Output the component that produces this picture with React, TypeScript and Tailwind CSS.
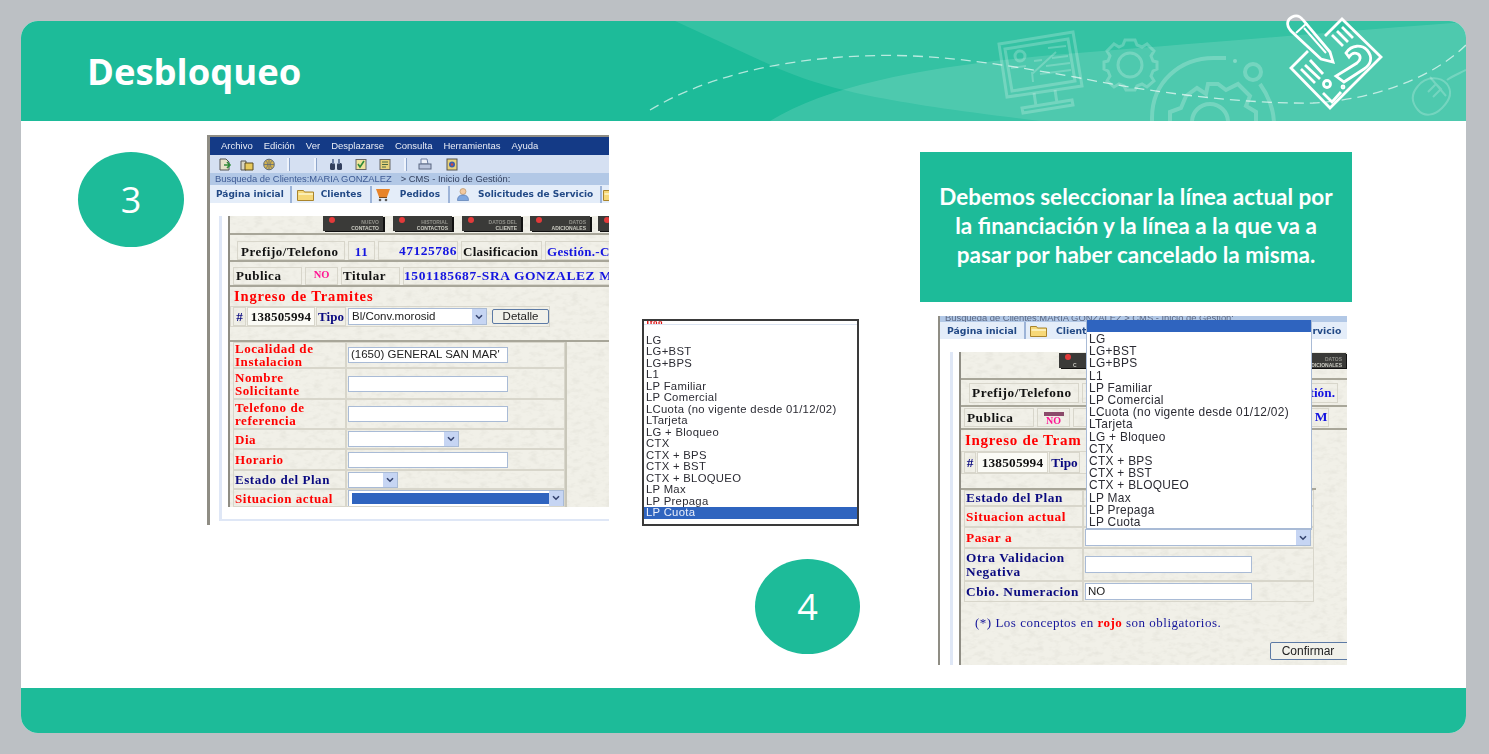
import type { ReactNode } from "react";

const listItems = [
  "LG",
  "LG+BST",
  "LG+BPS",
  "L1",
  "LP Familiar",
  "LP Comercial",
  "LCuota (no vigente desde 01/12/02)",
  "LTarjeta",
  "LG + Bloqueo",
  "CTX",
  "CTX + BPS",
  "CTX + BST",
  "CTX + BLOQUEO",
  "LP Max",
  "LP Prepaga",
  "LP Cuota",
];

function Paper() {
  return (
    <svg className="absolute inset-0 h-full w-full" aria-hidden="true">
      <filter id="paper-grain">
        <feTurbulence type="fractalNoise" baseFrequency="0.12 0.22" numOctaves="3" seed="4" />
        <feColorMatrix values="0 0 0 0 0.6  0 0 0 0 0.59  0 0 0 0 0.52  0.6 0 0 0 -0.27" />
      </filter>
      <rect width="100%" height="100%" filter="url(#paper-grain)" />
    </svg>
  );
}

function Cell({ className, children }: { className: string; children?: ReactNode }) {
  return (
    <div className={`flex shrink-0 items-center overflow-hidden whitespace-nowrap border border-[#d8d6cb] ${className}`}>
      {children}
    </div>
  );
}

function Chevron() {
  return (
    <div className="flex h-full w-[14px] shrink-0 items-center justify-center bg-[#c6d5f3]">
      <svg width="8" height="6" viewBox="0 0 8 6" fill="none" stroke="#34436e" strokeWidth="1.6">
        <path d="M1 1.2 4 4.2 7 1.2" />
      </svg>
    </div>
  );
}

function Field({ className, value }: { className: string; value?: string }) {
  return (
    <div className={`flex shrink-0 items-center overflow-hidden whitespace-nowrap border border-[#a9bbd6] bg-white pl-[2px] font-['Liberation_Sans',sans-serif] text-[11.500px] text-[#222] ${className}`}>
      {value}
    </div>
  );
}

function SelectBox({ className, value, fill }: { className: string; value?: string; fill?: boolean }) {
  return (
    <div className={`flex shrink-0 items-center justify-between border border-[#a9bbd6] bg-white pl-[3px] font-['Liberation_Sans',sans-serif] text-[11.500px] text-[#222] ${className}`}>
      {fill ? <div className="h-[11px] flex-1 bg-[#2f64bf]" /> : <span>{value}</span>}
      <Chevron />
    </div>
  );
}

function ActionButton({ top, bottom, className }: { top: string; bottom: string; className: string }) {
  return (
    <div className={`relative flex h-[15px] shrink-0 flex-col items-end justify-end overflow-hidden bg-[#3a3a38] pr-[4px] font-['Liberation_Sans',sans-serif] text-[5px] font-bold leading-[6px] text-[#c9c9c0] shadow-[2px_1px_0_#111] ${className}`}>
      <span className="absolute left-[6px] top-[1px] h-[6px] w-[6px] rounded-full bg-[#e33a3a]" />
      <span className="opacity-60">{top}</span>
      <span>{bottom}</span>
    </div>
  );
}

function MenuBar() {
  return (
    <div className="flex h-[18px] items-center gap-[11px] bg-[#143a86] pl-[11px] font-['Liberation_Sans',sans-serif] text-[9.500px] text-[#e8ecf5]">
      <span>Archivo</span>
      <span>Edición</span>
      <span>Ver</span>
      <span>Desplazarse</span>
      <span>Consulta</span>
      <span>Herramientas</span>
      <span>Ayuda</span>
    </div>
  );
}

function ToolIcon({ kind, className }: { kind: "page" | "folder" | "globe" | "find" | "check" | "note" | "print" | "photo"; className: string }) {
  return (
    <svg width="14" height="13" viewBox="0 0 14 13" className={`shrink-0 ${className}`}>
      {kind === "page" && (
        <>
          <path d="M2 1h6l3 3v8H2z" fill="#e6e3c8" stroke="#555" />
          <path d="M6 7h6M9 4l3 3-3 3" fill="none" stroke="#2f8a3a" strokeWidth="1.6" />
        </>
      )}
      {kind === "folder" && (
        <>
          <path d="M1 3h5v9H1z" fill="#d8d5c2" stroke="#555" />
          <path d="M5 5h8v7H5z" fill="#e7c95c" stroke="#5b4a1e" />
        </>
      )}
      {kind === "globe" && (
        <>
          <circle cx="7" cy="6.500" r="5.300" fill="#d7b54e" stroke="#5d6a7a" />
          <path d="M2 6.500h10M7 1.500v10M4 2.500c2 2 2 6 0 8M10 2.500c-2 2-2 6 0 8" fill="none" stroke="#5d6a7a" strokeWidth=".8" />
        </>
      )}
      {kind === "find" && (
        <>
          <rect x="1" y="5" width="5" height="7" rx="1.500" fill="#33405e" />
          <rect x="8" y="5" width="5" height="7" rx="1.500" fill="#33405e" />
          <path d="M3 1h2v5H3zM9 1h2v5H9z" fill="#6d7fa3" />
        </>
      )}
      {kind === "check" && (
        <>
          <rect x="2" y="1.500" width="10" height="10" fill="#efe39c" stroke="#666" />
          <path d="M4 6l2 3 4-6" fill="none" stroke="#2f8a3a" strokeWidth="1.6" />
        </>
      )}
      {kind === "note" && (
        <>
          <rect x="2" y="1.500" width="10" height="10" fill="#e7d27a" stroke="#666" />
          <path d="M4 4h6M4 6.500h6M4 9h4" stroke="#4d6a45" />
        </>
      )}
      {kind === "print" && (
        <>
          <path d="M3 1h6l1 5H3z" fill="#eef1f8" stroke="#6d7fa3" />
          <rect x="1" y="6" width="12" height="5" fill="#b9c4dc" stroke="#5a6680" />
        </>
      )}
      {kind === "photo" && (
        <>
          <rect x="2" y="1" width="10" height="11" fill="#e7d27a" stroke="#555" />
          <circle cx="7" cy="6.500" r="3" fill="#3d5fb0" />
          <circle cx="7" cy="6.500" r="1.200" fill="#d9483b" />
        </>
      )}
    </svg>
  );
}

function ToolSep({ className }: { className: string }) {
  return <div className={`h-[13px] w-[2px] shrink-0 bg-[#eef3fb] shadow-[1px_0_0_#8fa6cb] ${className}`} />;
}

function Toolbar() {
  return (
    <div className="flex h-[18px] items-center bg-[#d5e0f2] pl-[8px]">
      <ToolIcon kind="page" className="" />
      <ToolIcon kind="folder" className="ml-[8px]" />
      <ToolIcon kind="globe" className="ml-[8px]" />
      <ToolSep className="ml-[11px]" />
      <ToolSep className="ml-[25px]" />
      <ToolIcon kind="find" className="ml-[13px]" />
      <ToolIcon kind="check" className="ml-[11px]" />
      <ToolIcon kind="note" className="ml-[10px]" />
      <ToolSep className="ml-[12px]" />
      <ToolIcon kind="print" className="ml-[12px]" />
      <ToolIcon kind="photo" className="ml-[13px]" />
    </div>
  );
}

function FolderIcon() {
  return (
    <svg width="17" height="13" viewBox="0 0 17 13" className="shrink-0">
      <path d="M.5 2.500h6l1 1.500h9v8.500H.5z" fill="#f6d878" stroke="#a9842c" />
      <path d="M1.500 5h14.500v2H1.500z" fill="#fbeeb5" />
    </svg>
  );
}

function CartIcon() {
  return (
    <svg width="16" height="14" viewBox="0 0 16 14" className="shrink-0">
      <path d="M1 1h14l-3 8H4z" fill="#e8842a" />
      <path d="M4 9.500h8" stroke="#7a4a1e" />
      <circle cx="5" cy="12" r="1.300" fill="#5b5b5b" />
      <circle cx="11" cy="12" r="1.300" fill="#5b5b5b" />
    </svg>
  );
}

function PersonIcon() {
  return (
    <svg width="12" height="13" viewBox="0 0 12 13" className="shrink-0">
      <circle cx="6" cy="3.500" r="3" fill="#f2c9a0" stroke="#b08a5a" strokeWidth=".6" />
      <path d="M.5 12.500c0-4 2-5.500 5.500-5.500s5.500 1.500 5.500 5.500z" fill="#7ea7e0" stroke="#4c6fa8" strokeWidth=".6" />
    </svg>
  );
}

function TabSep({ className }: { className: string }) {
  return <div className={`h-[17px] w-[2px] shrink-0 bg-[#9db4d8] ${className}`} />;
}

function RedLabel({ children, className = "" }: { children: ReactNode; className?: string }) {
  return <span className={`font-bold leading-[13px] tracking-[0.55px] text-[#ff0000] ${className}`}>{children}</span>;
}

function NavyLabel({ children, className = "" }: { children: ReactNode; className?: string }) {
  return <span className={`font-bold leading-[14px] tracking-[0.55px] text-[#0a0a80] ${className}`}>{children}</span>;
}

function FirstShot() {
  return (
    <div className="mt-[14px] h-[390px] w-[402px] shrink-0 overflow-hidden border-l-[3px] border-t-2 border-[#8f8d84] bg-white blur-[0.35px]">
      <MenuBar />
      <Toolbar />
      <div className="flex h-[12px] items-center whitespace-nowrap bg-[#b2c8e6] pl-[5px] font-['Liberation_Sans',sans-serif] text-[9.400px] text-[#3d5a94]">
        Busqueda de Clientes:MARIA GONZALEZ<span className="ml-[9px] text-[#33405e]">&gt; CMS - Inicio de Gestión:</span>
      </div>
      <div className="flex h-[18px] items-center whitespace-nowrap bg-[#e4edf9] pl-[6px] pt-[1px] font-['DejaVu_Sans',sans-serif] text-[9px] font-bold text-[#234a86]">
        <span>Página inicial</span>
        <TabSep className="ml-[6px]" />
        <div className="ml-[5px]"><FolderIcon /></div>
        <span className="ml-[7px]">Clientes</span>
        <TabSep className="ml-[8px]" />
        <div className="ml-[3px]"><CartIcon /></div>
        <span className="ml-[9px]">Pedidos</span>
        <TabSep className="ml-[8px]" />
        <div className="ml-[7px]"><PersonIcon /></div>
        <span className="ml-[9px]">Solicitudes de Servicio</span>
        <TabSep className="ml-[7px]" />
        <div className="ml-[1px]"><FolderIcon /></div>
      </div>
      <div className="ml-[9px] pt-[13px]">
        <div className="h-[305px] w-[400px] border-b-2 border-l-[3px] border-[#dfe7f6] pb-[14px] pl-[6px]">
          <div className="relative h-[291px] w-[400px] overflow-hidden border-l-2 border-[#8f8d84] bg-[#f1f0e8] font-['Liberation_Serif',serif] text-[13px]">
            <Paper />
            <div className="relative">
              <div className="flex h-[17px] items-start">
                <ActionButton top="NUEVO" bottom="CONTACTO" className="ml-[93px] w-[60px]" />
                <ActionButton top="HISTORIAL" bottom="CONTACTOS" className="ml-[10px] w-[59px]" />
                <ActionButton top="DATOS DEL" bottom="CLIENTE" className="ml-[10px] w-[59px]" />
                <ActionButton top="DATOS" bottom="ADICIONALES" className="ml-[9px] w-[60px]" />
                <ActionButton top="" bottom="" className="ml-[8px] w-[20px]" />
              </div>
              <div className="flex h-[27px] items-end gap-[3px] border-t-2 border-[#a8a699] pl-[7px]">
                <Cell className="h-[19px] w-[108px] pl-[3px] pt-[2px]"><span className="font-bold tracking-[0.55px] text-[#111]">Prefijo/Telefono</span></Cell>
                <Cell className="h-[19px] w-[27px] justify-center pt-[2px]"><span className="font-bold tracking-[0.5px] text-[#1414e0]">11</span></Cell>
                <Cell className="h-[19px] w-[80px] justify-end pt-[2px]"><span className="text-[13.500px] font-bold tracking-[0.5px] text-[#1414e0]">47125786</span></Cell>
                <Cell className="h-[19px] w-[81px] pl-[1px] pt-[2px]"><span className="font-bold tracking-[0.3px] text-[#111]">Clasificacion</span></Cell>
                <Cell className="h-[19px] w-[70px] pl-[1px] pt-[2px]"><span className="font-bold tracking-[0.3px] text-[#1414e0]">Gestión.-C</span></Cell>
              </div>
              <div className="flex h-[25px] items-end gap-[3px] border-t-2 border-[#a8a699] pl-[3px]">
                <Cell className="h-[18px] w-[69px] pl-[2px]"><span className="font-bold tracking-[0.5px] text-[#111]">Publica</span></Cell>
                <Cell className="h-[18px] w-[33px] items-start justify-center"><span className="text-[10.500px] font-bold leading-[13px] text-[#ff1493]">NO</span></Cell>
                <Cell className="h-[18px] w-[59px] pl-[1px]"><span className="font-bold tracking-[0.5px] text-[#111]">Titular</span></Cell>
                <Cell className="h-[18px] w-[212px]"><span className="text-[13.500px] font-bold tracking-[0.6px] text-[#1414e0]">1501185687-SRA GONZALEZ M</span></Cell>
              </div>
              <div className="h-[55px] border-t-2 border-[#a8a699]">
                <div className="h-[19px] pl-[4px]"><span className="text-[14.500px] font-bold leading-[19px] tracking-[0.85px] text-[#ff0000]">Ingreso de Tramites</span></div>
                <div className="flex h-[21px] w-[320px] items-center gap-[1px] border border-[#d8d6cb] pl-[2px]">
                  <Cell className="h-[19px] w-[13px] justify-center"><span className="font-bold text-[#0a0a80]">#</span></Cell>
                  <Cell className="h-[19px] w-[68px] justify-center bg-[#fbfbf6]"><span className="font-bold tracking-[0.2px] text-[#111]">138505994</span></Cell>
                  <Cell className="h-[19px] w-[30px] justify-center"><span className="font-bold text-[#0a0a80]">Tipo</span></Cell>
                  <SelectBox className="ml-[1px] h-[17px] w-[139px]" value="Bl/Conv.morosid" />
                  <div className="ml-[4px] flex h-[15px] w-[60px] items-center justify-center rounded-[2px] border border-[#5c7aa5] bg-[#f1f1ea] font-['Liberation_Sans',sans-serif] text-[11.500px] text-[#222]">Detalle</div>
                </div>
              </div>
              <div className="grid w-[400px] grid-cols-[113px_219px_50px] border-t-2 border-[#a8a699] pl-[3px]">
                <Cell className="h-[26px] pl-[1px]"><RedLabel className="whitespace-pre">{"Localidad de\nInstalacion"}</RedLabel></Cell>
                <Cell className="h-[26px] pl-[1px]"><Field className="h-[16px] w-[160px]" value="(1650) GENERAL SAN MAR'" /></Cell>
                <div className="row-span-7 border-l-2 border-[#c9c7ba]" />
                <Cell className="h-[31px] pl-[1px]"><RedLabel className="whitespace-pre">{"Nombre\nSolicitante"}</RedLabel></Cell>
                <Cell className="h-[31px] pl-[1px]"><Field className="h-[16px] w-[160px]" /></Cell>
                <Cell className="h-[30px] pl-[1px]"><RedLabel className="whitespace-pre">{"Telefono de\nreferencia"}</RedLabel></Cell>
                <Cell className="h-[30px] pl-[1px]"><Field className="h-[16px] w-[160px]" /></Cell>
                <Cell className="h-[20px] pl-[1px]"><RedLabel>Dia</RedLabel></Cell>
                <Cell className="h-[20px] pl-[1px]"><SelectBox className="h-[16px] w-[111px]" /></Cell>
                <Cell className="h-[21px] pl-[1px]"><RedLabel>Horario</RedLabel></Cell>
                <Cell className="h-[21px] pl-[1px]"><Field className="h-[16px] w-[160px]" /></Cell>
                <Cell className="h-[19px] pl-[1px]"><NavyLabel>Estado del Plan</NavyLabel></Cell>
                <Cell className="h-[19px] pl-[1px]"><SelectBox className="h-[16px] w-[50px]" /></Cell>
                <Cell className="h-[18px] pl-[1px]"><RedLabel>Situacion actual</RedLabel></Cell>
                <Cell className="h-[18px] pl-[1px]"><SelectBox className="h-[17px] w-[216px]" fill /></Cell>
              </div>
            </div>
          </div>
        </div>
      </div>
    </div>
  );
}

function ListShot() {
  return (
    <div className="mt-[198px] h-[207px] w-[217px] overflow-hidden border-2 border-[#3a3a3a] bg-white font-['Liberation_Sans',sans-serif] text-[11.300px] leading-[11.470px] tracking-[0.3px] text-[#2b2b33] blur-[0.3px]">
      <div className="h-[3px] overflow-hidden pl-[2px] font-['Liberation_Serif',serif] text-[9px] font-bold leading-[3px] text-[#d11]">Itoo</div>
      <div className="h-[10px] border-t border-[#dbe4f2]" />
      <div className="pl-[2px] pt-[1px]">
        {listItems.slice(0, 15).map((item) => (
          <div key={item} className="whitespace-nowrap">{item}</div>
        ))}
      </div>
      <div className="h-[11.500px] bg-[#2f64bf] pl-[2px] text-[#e9eefa]">LP Cuota</div>
    </div>
  );
}

function ThirdShot() {
  return (
    <div className="relative ml-[18px] mt-[14px] h-[349px] w-[409px] overflow-hidden border-l-[2px] border-[#8f8d84] bg-white blur-[0.35px]">
      <div className="flex h-[6px] items-end overflow-hidden whitespace-nowrap bg-[#b2c8e6] pl-[5px] font-['Liberation_Sans',sans-serif] text-[9.400px] leading-[8px] text-[#5a6680]">
        Busqueda de Clientes:MARIA GONZALEZ &gt; CMS - Inicio de Gestión:
      </div>
      <div className="flex h-[17px] items-center whitespace-nowrap bg-[#e4edf9] pl-[7px] font-['DejaVu_Sans',sans-serif] text-[9.300px] font-bold text-[#234a86]">
        <span>Página inicial</span>
        <TabSep className="ml-[7px]" />
        <div className="ml-[4px]"><FolderIcon /></div>
        <span className="ml-[9px]">Clientes</span>
        <span className="ml-[201px]">Servicio</span>
      </div>
      <div className="ml-[10px] pt-[13px]">
        <div className="h-[313px] border-l-[3px] border-[#dfe7f6] pl-[6px]">
          <div className="relative h-[313px] w-[400px] overflow-hidden border-l-2 border-[#8f8d84] bg-[#f1f0e8] font-['Liberation_Serif',serif] text-[13.300px]">
            <Paper />
            <div className="relative">
              <div className="flex h-[26px] items-start">
                <div className="ml-[98px] mt-[1px] flex"><ActionButton top="" bottom="C" className="w-[60px] !items-start pl-[14px]" /></div>
                <ActionButton top="DATOS" bottom="ADICIONALES" className="ml-[167px] mt-[1px] w-[60px]" />
              </div>
              <div className="flex h-[27px] items-end gap-[3px] border-t-2 border-[#a8a699] pb-[2px] pl-[8px]">
                <Cell className="h-[20px] w-[110px] pl-[2px]"><span className="font-bold tracking-[0.55px] text-[#111]">Prefijo/Telefono</span></Cell>
                <Cell className="h-[20px] w-[256px] justify-end pr-[2px]"><span className="font-bold text-[#1414e0]">Gestión.</span></Cell>
              </div>
              <div className="flex h-[23px] items-end gap-[3px] border-t-2 border-[#a8a699] pb-[1px] pl-[3px]">
                <Cell className="h-[19px] w-[70px] pl-[2px]"><span className="font-bold tracking-[0.5px] text-[#111]">Publica</span></Cell>
                <Cell className="h-[19px] w-[33px] flex-col justify-end"><div className="h-[4px] w-[20px] bg-[#8a4a6a]" /><span className="text-[10px] font-bold leading-[10px] text-[#ff1493]">NO</span></Cell>
                <Cell className="h-[19px] w-[256px] justify-end"><span className="text-[13.500px] font-bold tracking-[0.6px] text-[#1414e0]">ALEZ M</span></Cell>
              </div>
              <div className="h-[60px] border-t-2 border-[#a8a699]">
                <div className="h-[21px] pl-[4px]"><span className="text-[15px] font-bold leading-[21px] tracking-[0.7px] text-[#ff0000]">Ingreso de Tram</span></div>
                <div className="flex h-[23px] w-[320px] items-center gap-[1px] border border-[#d8d6cb] pl-[2px]">
                  <Cell className="h-[21px] w-[12px] justify-center"><span className="font-bold text-[#0a0a80]">#</span></Cell>
                  <Cell className="h-[21px] w-[71px] justify-center bg-[#fbfbf6]"><span className="font-bold tracking-[0.2px] text-[#111]">138505994</span></Cell>
                  <Cell className="h-[21px] w-[31px] justify-center"><span className="font-bold text-[#0a0a80]">Tipo</span></Cell>
                </div>
              </div>
              <div className="grid w-[355px] grid-cols-[119px_231px] border-t-2 border-[#a8a699] pl-[3px]">
                <Cell className="h-[16px] pl-[1px]"><NavyLabel>Estado del Plan</NavyLabel></Cell>
                <Cell className="h-[16px]" />
                <Cell className="h-[21px] pl-[1px]"><RedLabel>Situacion actual</RedLabel></Cell>
                <Cell className="h-[21px]" />
                <Cell className="h-[21px] pl-[1px]"><RedLabel>Pasar a</RedLabel></Cell>
                <Cell className="h-[21px] pl-[1px]"><SelectBox className="h-[17px] w-[226px]" /></Cell>
                <Cell className="h-[33px] pl-[1px]"><NavyLabel className="whitespace-pre">{"Otra Validacion\nNegativa"}</NavyLabel></Cell>
                <Cell className="h-[33px] pl-[1px]"><Field className="h-[17px] w-[167px]" /></Cell>
                <Cell className="h-[21px] pl-[1px]"><NavyLabel className="tracking-[0.4px]">Cbio. Numeracion</NavyLabel></Cell>
                <Cell className="h-[21px] pl-[1px]"><Field className="h-[17px] w-[167px]" value="NO" /></Cell>
              </div>
              <div className="mt-[13px] pl-[14px] text-[13px] leading-[15px] tracking-[0.5px] text-[#15159a]">
                (*) Los conceptos en <span className="font-bold text-[#ff0000]">rojo</span> son obligatorios.
              </div>
              <div className="ml-[309px] mt-[12px] flex h-[18px] w-[100px] items-center justify-center rounded-[2px] border border-[#5c7aa5] bg-[#f1f1ea] pr-[24px] font-['Liberation_Sans',sans-serif] text-[12px] text-[#222]">Confirmar</div>
            </div>
          </div>
        </div>
      </div>
      <div className="absolute left-[146px] top-[4px] w-[226px] border-x border-b-2 border-[#a9bbd6] bg-white pl-[2px] font-['Liberation_Sans',sans-serif] text-[11.900px] leading-[12.200px] tracking-[0.3px] text-[#2b2b33]">
        <div className="-ml-[2px] mb-[1px] h-[12px] bg-[#2f64bf]" />
        {listItems.map((item) => (
          <div key={item} className="whitespace-nowrap">{item}</div>
        ))}
      </div>
    </div>
  );
}

function HeaderArt() {
  return (
    <>
      <svg className="absolute inset-0 h-full w-full overflow-hidden rounded-t-[17px]" viewBox="21 21 1445 100" fill="none" aria-hidden="true">
        <path d="M675 21 775 67C830 92 900 104 1040 121H1466V21Z" fill="#fff" fillOpacity=".1" />
        <path d="M770 121C840 78 960 62 1090 52 1240 40 1360 30 1466 22V121Z" fill="#fff" fillOpacity=".13" />
        <g stroke="#fff" strokeOpacity=".22" strokeWidth="3">
          <path d="M999 44 1073 32 1082 86 1007 97Z" />
          <path d="M1005 49 1068 39 1075 81 1012 91Z" />
          <path d="M1034 93 1036 106M1055 90 1057 103M1022 108 1072 100 1073 105 1023 113Z" />
          <circle cx="1020" cy="56" r="5" />
          <path d="M1011 68 1026 66M1032 74 1056 52M1034 61 1042 60M1048 48 1066 46M1052 58 1068 56M1046 66 1070 63M1040 74 1071 70M1032 72 1033 82" strokeWidth="2" />
          <circle cx="1130" cy="65" r="12" />
          <path d="M1125 40H1135L1137 45 1142 47 1147 44 1154 51 1151 56 1153 61 1157 62V69L1153 71 1151 76 1154 81 1147 87 1142 84 1137 86 1135 90H1126L1124 86 1119 84 1114 87 1107 81 1110 76 1108 71 1104 69V62L1108 61 1110 56 1107 51 1114 44 1119 47 1123 45Z" />
          <path d="M1152 130V118C1152 82 1180 58 1214 58H1226" strokeWidth="4" />
          <path d="M1260 84C1270 98 1274 110 1274 125" strokeWidth="4" />
          <circle cx="1253" cy="72" r="8" strokeWidth="4" />
          <circle cx="1235" cy="61" r="2" fill="#fff" fillOpacity=".3" stroke="none" />
          <circle cx="1210" cy="122" r="18" strokeWidth="4" />
          <path d="M1170 125V112L1181 108 1186 96 1197 88 1206 94 1208 84H1218L1226 90 1238 84 1250 96 1246 106 1256 112V125" strokeWidth="4" />
          <path d="M1418 86C1426 76 1440 76 1447 84 1453 92 1450 100 1442 108 1434 116 1424 117 1418 110 1411 102 1411 94 1418 86Z" strokeWidth="2" />
          <path d="M1430 77 1446 96M1428 92 1436 84 1441 89 1433 97M1447 80C1452 76 1458 74 1466 70" strokeWidth="2" />
        </g>
        <path d="M650 110C700 80 770 60 860 56 930 53 990 62 1080 78 1150 92 1240 104 1313 103 1370 100 1430 80 1466 45" stroke="#fff" strokeOpacity=".65" strokeWidth="1.300" strokeDasharray="10 6" />
      </svg>
      <svg className="absolute inset-0 h-full w-full overflow-visible" viewBox="21 21 1445 100" fill="none" aria-hidden="true">
        <g stroke="#fff" strokeWidth="2.800">
          <path d="M1325 36 1342 19 1381 57 1330 108 1291 68 1308 51" />
          <path d="M1291 31C1285 24 1288 19 1292 17 1296 15 1300 16 1303 20L1330 52 1333 62 1321 59Z" />
          <path d="M1296 33 1307 23M1304 28 1326 53" strokeWidth="2" />
          <path d="M1346 53C1352 44 1362 45 1367 50 1374 58 1370 65 1364 69L1344 82 1336 76 1357 63C1361 60 1361 56 1358 54 1354 52 1351 54 1349 57Z" />
          <circle cx="1327" cy="84" r="3.500" />
          <path d="M1301 69 1315 83M1305 65 1320 79M1310 60 1323 74M1332 35 1343 46M1337 31 1348 42M1342 27 1353 38M1323 93 1332 102 1341 92" />
          <circle cx="1343" cy="87" r="1" />
        </g>
      </svg>
    </>
  );
}

export default function App() {
  return (
    <div className="h-[754px] w-[1489px] overflow-hidden bg-[#bcc0c4] p-[21px]">
      <div className="flex h-[712px] w-[1445px] flex-col rounded-[17px] bg-white">
        <header className="relative h-[100px] shrink-0 rounded-t-[17px] bg-[#1dbb99]">
          <HeaderArt />
          <h1 className="relative pl-[66px] pt-[25px] font-['Open_Sans',sans-serif] text-[36.400px] font-bold leading-[50px] text-white">Desbloqueo</h1>
        </header>
        <main className="flex h-[567px] items-start overflow-hidden pl-[57px]">
          <div className="mt-[31px] flex h-[95px] w-[106px] shrink-0 items-center justify-center rounded-[50%] bg-[#1dbb99] font-['Open_Sans',sans-serif] text-[36px] text-white">3</div>
          <div className="ml-[23px] shrink-0"><FirstShot /></div>
          <div className="ml-[33px] w-[217px] shrink-0">
            <ListShot />
            <div className="ml-[113px] mt-[33px] flex h-[95px] w-[105px] items-center justify-center rounded-[50%] bg-[#1dbb99] font-['Open_Sans',sans-serif] text-[36px] text-white">4</div>
          </div>
          <div className="ml-[61px] w-[432px] shrink-0">
            <div className="mt-[31px] flex h-[150px] items-center justify-center bg-[#1dbb99] px-[5px] pb-[4px] text-center font-['Lato',sans-serif] text-[22.500px] font-bold leading-[29px] text-white">
              <p>
                Debemos seleccionar la línea actual por
                <br />
                la financiación y la línea a la que va a
                <br />
                pasar por haber cancelado la misma.
              </p>
            </div>
            <ThirdShot />
          </div>
        </main>
        <footer className="h-[45px] shrink-0 rounded-b-[17px] bg-[#1dbb99]" />
      </div>
    </div>
  );
}
